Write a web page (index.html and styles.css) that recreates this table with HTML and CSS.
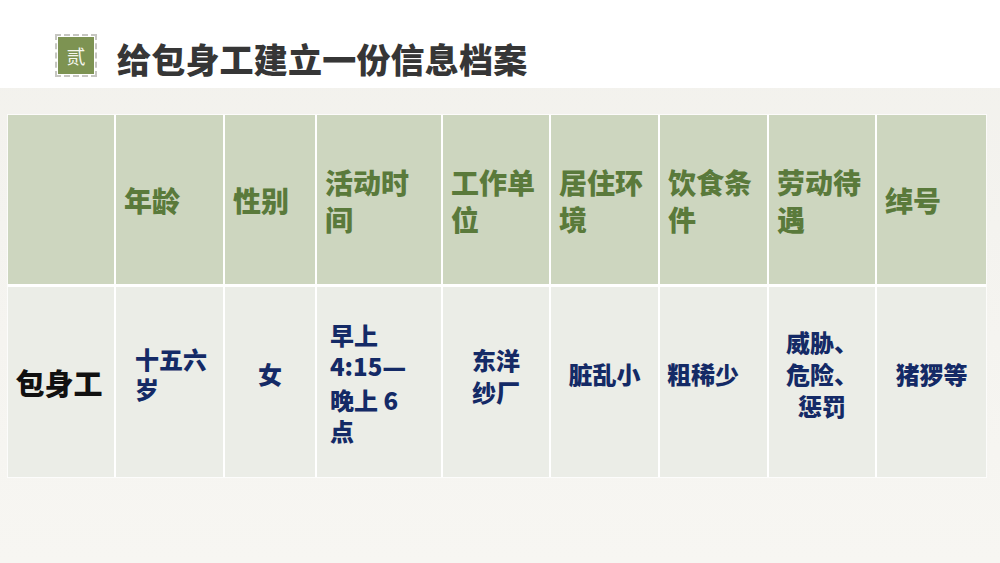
FILE: index.html
```html
<!DOCTYPE html>
<html lang="zh-CN">
<head>
<meta charset="utf-8">
<title>给包身工建立一份信息档案</title>
<link rel="stylesheet" href="styles.css">
</head>
<body>
<header class="title-bar">
  <div class="badge"><span>贰</span></div>
  <h1 class="title">给包身工建立一份信息档案</h1>
</header>
<main class="content">
  <div class="table">
    <div class="th"></div>
    <div class="th">年龄</div>
    <div class="th">性别</div>
    <div class="th">活动时间</div>
    <div class="th">工作单位</div>
    <div class="th">居住环境</div>
    <div class="th">饮食条件</div>
    <div class="th">劳动待遇</div>
    <div class="th last">绰号</div>

    <div class="td rowhead">包身工</div>
    <div class="td age">十五六岁</div>
    <div class="td center">女</div>
    <div class="td time"><div class="lines">早上<br>4:15<span class="dash">—</span><br>晚上 6<br>点</div></div>
    <div class="td factory">东洋<br>纱厂</div>
    <div class="td center">脏乱小</div>
    <div class="td food">粗稀少</div>
    <div class="td center">威胁、<br>危险、<br>惩罚</div>
    <div class="td center last">猪猡等</div>
  </div>
</main>
</body>
</html>
```

FILE: styles.css
```css
html, body {
  margin: 0;
  padding: 0;
}

body {
  width: 1000px;
  height: 563px;
  overflow: hidden;
  font-family: "Noto Sans CJK SC", "Noto Sans", sans-serif;
  background: linear-gradient(180deg, #f2f1ec 0%, #f4f3ef 40%, #f7f6f2 100%);
}

.title-bar {
  height: 88px;
  background: #ffffff;
  display: flex;
  align-items: flex-start;
  padding: 37px 0 0 58px;
  box-sizing: border-box;
}

.badge {
  width: 36px;
  height: 37px;
  background: #7d9352;
  outline: 2px dashed rgba(130, 130, 120, 0.45);
  outline-offset: 1px;
  display: flex;
  align-items: center;
  justify-content: center;
}

.badge span {
  color: #f4f6ee;
  font-size: 19px;
  font-weight: 400;
  line-height: 1;
}

.title {
  margin: 2px 0 0 23px;
  font-size: 34px;
  font-weight: 900;
  color: #363636;
  letter-spacing: 0.2px;
  line-height: 40px;
}

.content {
  padding: 27px 0 0 8px;
}

.table {
  display: grid;
  grid-template-columns: 108px 109px 92px 126px 108px 109px 109px 108px 109px;
  grid-template-rows: 172px 190px;
  width: 978px;
  box-shadow: 0 0 0 1px rgba(255, 255, 255, 0.7);
}

.th,
.td {
  box-sizing: border-box;
  border-right: 2px solid #ffffff;
  display: flex;
  align-items: center;
}

.last {
  border-right: none;
}

.th {
  background: #cdd6bf;
  border-bottom: 3px solid #ffffff;
  color: #5a7a3b;
  font-size: 28px;
  font-weight: 900;
  line-height: 37px;
  padding: 2px 6px 0 8px;
}

.td {
  background: #ebede7;
  color: #142a66;
  font-size: 24px;
  font-weight: 900;
  line-height: 32px;
  padding-bottom: 16px;
}

.rowhead {
  color: #111111;
  font-size: 29px;
  justify-content: center;
  padding-bottom: 0;
  padding-right: 4px;
}

.center {
  justify-content: center;
  text-align: center;
}

.age {
  padding-left: 19px;
  padding-right: 10px;
  line-height: 30px;
}

.time {
  padding-left: 13px;
  padding-bottom: 0;
  line-height: 31px;
}

.dash {
  font-family: "DejaVu Sans", sans-serif;
  font-weight: 700;
  font-size: 24px;
}

.factory {
  padding-left: 29px;
  padding-bottom: 12px;
}

.food {
  padding-left: 7px;
}
```
